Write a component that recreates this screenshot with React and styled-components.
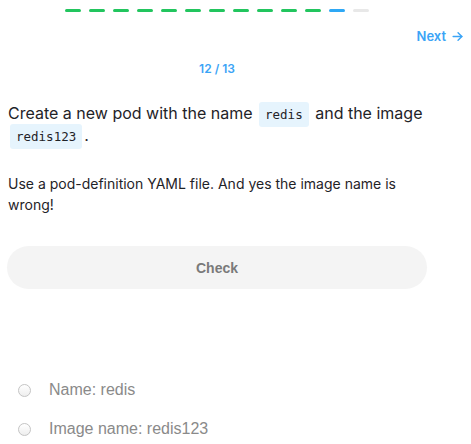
import React from "react";
import styled, { createGlobalStyle } from "styled-components";

const steps = Array.from({ length: 13 }, (_, i) => (i < 11 ? "done" : i === 11 ? "current" : "todo"));
const hints = ["Name: redis", "Image name: redis123"];

function App() {
  return (
    <Page>
      <GlobalStyle />
      <Column>
        <Progress>
          {steps.map((s, i) => (
            <Dash key={i} $state={s} />
          ))}
        </Progress>
      </Column>
      <NextRow>
        <NextLink>
          Next
          <svg width="13" height="13" viewBox="0 0 24 24" fill="none" stroke="currentColor" strokeWidth="2.6" strokeLinecap="round" strokeLinejoin="round">
            <path d="M4 12h16" />
            <path d="M13 5l7 7-7 7" />
          </svg>
        </NextLink>
      </NextRow>
      <Column>
        <Counter>12 / 13</Counter>
        <Question>
          Create a new pod with the name <Code>redis</Code> and the image <Code>redis123</Code>.
        </Question>
        <Note>Use a pod-definition YAML file. And yes the image name is wrong!</Note>
        <CheckButton>Check</CheckButton>
        <Hints>
          {hints.map((h) => (
            <Hint key={h}>
              <Radio />
              {h}
            </Hint>
          ))}
        </Hints>
      </Column>
    </Page>
  );
}

const GlobalStyle = createGlobalStyle`
  body {
    margin: 0;
    background: #ffffff;
    font-family: Inter, "Noto Sans", sans-serif;
  }
`;
const Page = styled.div`
  display: flex;
  flex-direction: column;
  padding: 0 7px;
`;
const Column = styled.div`
  width: 420px;
  display: flex;
  flex-direction: column;
`;
const Progress = styled.div`
  display: flex;
  justify-content: center;
  gap: 8px;
  padding-top: 9px;
`;
const Dash = styled.div`
  width: 16px;
  height: 3px;
  border-radius: 2px;
  background-color: ${(p) => (p.$state === "done" ? "#22c55e" : p.$state === "current" ? "#2ea8f5" : "#e8e8e8")};
`;
const NextRow = styled.div`
  display: flex;
  justify-content: flex-end;
  margin-top: 16px;
`;
const NextLink = styled.a`
  display: flex;
  align-items: center;
  gap: 5px;
  color: #3ba4f6;
  font-size: 13px;
  font-weight: 600;
  cursor: pointer;
`;
const Counter = styled.div`
  margin-top: 17px;
  text-align: center;
  color: #3ba4f6;
  font-size: 12px;
  font-weight: 600;
`;
const Question = styled.p`
  margin: 26px 0 0 1px;
  font-size: 16px;
  line-height: 22px;
  color: #1f2328;
`;
const Code = styled.code`
  font-family: "DejaVu Sans Mono", monospace;
  font-size: 12.5px;
  line-height: 1;
  background-color: #e6f4fd;
  border-radius: 3px;
  padding: 5px 6px;
  margin: 0 2px;
`;
const Note = styled.p`
  margin: 27px 0 0 1px;
  font-size: 14px;
  line-height: 21px;
  color: #1f2328;
  width: 400px;
`;
const CheckButton = styled.button`
  margin-top: 31px;
  height: 43px;
  border: none;
  border-radius: 22px;
  background-color: #f4f4f4;
  color: #7a7a7a;
  font-family: "Liberation Sans", Arial, sans-serif;
  font-size: 14px;
  font-weight: 700;
`;
const Hints = styled.div`
  display: flex;
  flex-direction: column;
  gap: 21px;
  margin-top: 92px;
  padding-left: 11px;
`;
const Hint = styled.div`
  display: flex;
  align-items: center;
  gap: 18px;
  font-family: "Liberation Sans", Arial, sans-serif;
  font-size: 16px;
  color: #8a8a8a;
`;
const Radio = styled.span`
  width: 11px;
  height: 11px;
  border-radius: 50%;
  border: 1px solid #c4c4c4;
  background: linear-gradient(#ffffff, #eeeeee);
`;

export default App;
